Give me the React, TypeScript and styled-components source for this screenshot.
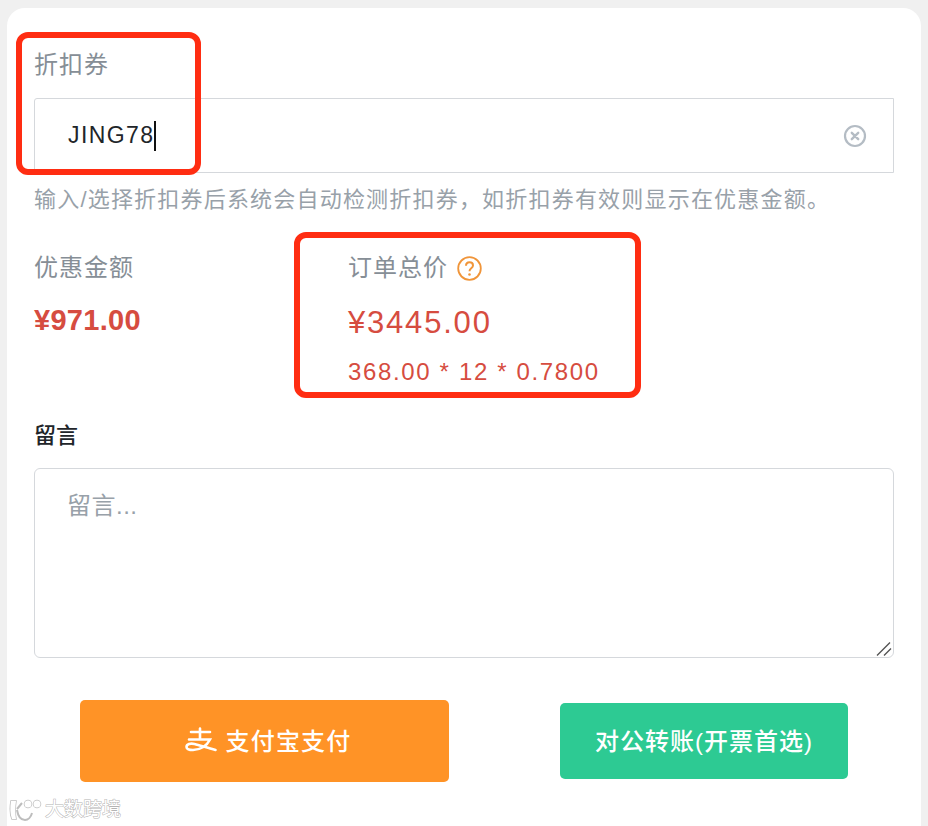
import styled, { createGlobalStyle } from "styled-components";
import { useState } from "react";

const GlobalStyle = createGlobalStyle`
  html, body {
    margin: 0;
    padding: 0;
    height: 826px;
    overflow: hidden;
    background: #f0f0f0;
    font-family: "Liberation Sans", "Noto Sans CJK SC", sans-serif;
  }
`;

const Page = styled.div`
  position: relative;
  width: 928px;
  height: 826px;
  padding: 8px 7px 0;
  box-sizing: border-box;
  overflow: hidden;
`;

const Card = styled.div`
  background: #fff;
  border-radius: 18px 18px 0 0;
  height: 818px;
  box-sizing: border-box;
  padding: 40px 27px 0;
  display: flex;
  flex-direction: column;
`;

const Label = styled.div<{ $dark?: boolean }>`
  font-size: 24px;
  line-height: 34px;
  letter-spacing: 1px;
  color: ${(p) => (p.$dark ? "#212529" : "#868e96")};
  font-weight: ${(p) => (p.$dark ? 500 : 400)};
`;

const DarkLabel = styled(Label)`
  font-size: 22px;
  line-height: 30px;
  letter-spacing: 0;
`;

const InputWrap = styled.div`
  margin-top: 16px;
  height: 75px;
  box-sizing: border-box;
  border: 1px solid #d5d8dc;
  border-radius: 3px 0 0 3px;
  display: flex;
  align-items: center;
  padding: 0 26px 0 33px;
`;

const CouponValue = styled.span`
  font-size: 23px;
  letter-spacing: 1.4px;
  color: #212529;
`;

const Caret = styled.span`
  width: 2px;
  height: 30px;
  background: #111;
`;

const ClearButton = styled.button`
  margin-left: auto;
  width: 24px;
  height: 24px;
  padding: 0;
  border: 0;
  background: none;
  display: flex;
`;

const Help = styled.div`
  margin-top: 11px;
  font-size: 22px;
  line-height: 32px;
  letter-spacing: 1.2px;
  color: #98a1a9;
`;

const Summary = styled.div`
  display: grid;
  grid-template-columns: 314px 1fr;
  margin-top: 35px;
`;

const Column = styled.div`
  display: flex;
  flex-direction: column;
`;

const LabelRow = styled.div`
  display: flex;
  align-items: center;
  gap: 9px;
`;

const Amount = styled.div<{ $bold?: boolean }>`
  margin-top: ${(p) => (p.$bold ? "15px" : "18px")};
  font-size: ${(p) => (p.$bold ? "29px" : "31px")};
  line-height: 40px;
  color: #d64c40;
  font-weight: ${(p) => (p.$bold ? 700 : 400)};
  letter-spacing: ${(p) => (p.$bold ? "0.3px" : "1.8px")};
`;

const Formula = styled.div`
  margin-top: 12px;
  font-size: 24px;
  line-height: 34px;
  letter-spacing: 1.65px;
  color: #d64c40;
`;

const MessageBlock = styled.div`
  margin-top: 32px;
  display: flex;
  flex-direction: column;
  gap: 17px;
`;

const MessageField = styled.div`
  position: relative;
  width: 860px;
  height: 190px;
`;

const MessageInput = styled.textarea`
  display: block;
  width: 100%;
  height: 100%;
  box-sizing: border-box;
  border: 1px solid #d5d8dc;
  border-radius: 6px;
  padding: 20px 32px;
  font-family: inherit;
  font-size: 24px;
  line-height: 34px;
  letter-spacing: 0.5px;
  outline: none;
  resize: none;

  &::placeholder {
    color: #98a1a9;
    opacity: 1;
  }
`;

const ResizeGrip = styled.svg`
  position: absolute;
  right: 2px;
  bottom: 2px;
`;

const Actions = styled.div`
  display: flex;
  align-items: center;
  margin-top: 42px;
  padding-left: 46px;
  gap: 111px;
`;

const PayButton = styled.button<{ $green?: boolean }>`
  border: 0;
  border-radius: 5px;
  color: #fff;
  font-family: inherit;
  font-size: 24px;
  font-weight: 500;
  letter-spacing: ${(p) => (p.$green ? "1px" : "1.2px")};
  display: flex;
  align-items: center;
  justify-content: center;
  gap: 9px;
  padding: ${(p) => (p.$green ? "0 0 4px" : "0 0 4px 7px")};
  width: ${(p) => (p.$green ? "288px" : "369px")};
  height: ${(p) => (p.$green ? "76px" : "82px")};
  background: ${(p) => (p.$green ? "#2dca93" : "#ff9326")};
`;

const Highlight = styled.div`
  position: absolute;
  box-sizing: border-box;
  border: 6px solid #ff2d12;
  border-radius: 12px;
`;

const CouponHighlight = styled(Highlight)`
  left: 16px;
  top: 32px;
  width: 185px;
  height: 143px;
`;

const TotalHighlight = styled(Highlight)`
  left: 294px;
  top: 232px;
  width: 347px;
  height: 166px;
`;

const Watermark = styled.div`
  position: absolute;
  left: 9px;
  top: 796px;
  display: flex;
  align-items: center;
  gap: 3px;
  color: #fff;
  font-size: 19px;
  line-height: 26px;
  -webkit-text-stroke: 1px #b4b4b4;
  paint-order: stroke;
`;

const AlipayMark = () => (
  <svg width="32" height="25" viewBox="0 0 32 25" fill="none" stroke="#fff" strokeWidth="2.600" strokeLinecap="round">
    <path d="M6 5h19M15 1.500v11M4 12.500h21c-3 6-9 10-17 10.500-4 0-6.500-1-6.500-3 0-3 4-4 8-3 6 1.500 13 4 21 6" />
  </svg>
);

const ClearIcon = () => (
  <svg width="24" height="24" viewBox="0 0 24 24" fill="none" stroke="#b4bcc4" strokeLinecap="round">
    <circle cx="12" cy="12" r="10" strokeWidth="2.200" />
    <path d="M8.800 8.800l6.400 6.400M15.200 8.800l-6.400 6.400" strokeWidth="2.400" />
  </svg>
);

const HelpIcon = () => (
  <svg width="25" height="25" viewBox="0 0 25 25" fill="none" stroke="#f0953a">
    <circle cx="12.500" cy="12.500" r="11.300" strokeWidth="1.800" />
    <path d="M9 9.800c0-2.200 1.600-3.500 3.500-3.500s3.500 1.300 3.500 3.200c0 2.800-3.500 2.800-3.500 5.700" strokeWidth="2" />
    <circle cx="12.500" cy="18.500" r="1.300" fill="#f0953a" stroke="none" />
  </svg>
);

const WatermarkLogo = () => (
  <svg width="33" height="28" viewBox="0 0 33 28" fill="none" stroke="#bdbdbd" strokeWidth="1.500">
    <path d="M2 5c-1 6-1 13 1 18h4c-1-5-1-12 0-18z" fill="#fff" />
    <path d="M8 13l5-6M8 14c1 6 4 10 8 10 3 0 6-3 7-7" strokeWidth="2" />
    <circle cx="19" cy="8" r="3.500" fill="#fff" />
    <circle cx="28" cy="8" r="3.500" fill="#fff" />
  </svg>
);

export default function App() {
  const [message, setMessage] = useState("");
  return (
    <Page>
      <GlobalStyle />
      <Card>
        <Label>折扣券</Label>
        <InputWrap>
          <CouponValue>JING78</CouponValue>
          <Caret />
          <ClearButton aria-label="清除">
            <ClearIcon />
          </ClearButton>
        </InputWrap>
        <Help>输入/选择折扣券后系统会自动检测折扣券，如折扣券有效则显示在优惠金额。</Help>
        <Summary>
          <Column>
            <Label>优惠金额</Label>
            <Amount $bold>¥971.00</Amount>
          </Column>
          <Column>
            <LabelRow>
              <Label>订单总价</Label>
              <HelpIcon />
            </LabelRow>
            <Amount>¥3445.00</Amount>
            <Formula>368.00 * 12 * 0.7800</Formula>
          </Column>
        </Summary>
        <MessageBlock>
          <DarkLabel $dark>留言</DarkLabel>
          <MessageField>
            <MessageInput
              placeholder="留言..."
              value={message}
              onChange={(e) => setMessage(e.target.value)}
            />
            <ResizeGrip width="16" height="14" viewBox="0 0 16 14" stroke="#555" strokeWidth="1.400">
              <path d="M1 13.500L14 .5M8 13.500L15 6.500" />
            </ResizeGrip>
          </MessageField>
        </MessageBlock>
        <Actions>
          <PayButton>
            <AlipayMark />
            支付宝支付
          </PayButton>
          <PayButton $green>对公转账(开票首选)</PayButton>
        </Actions>
      </Card>
      <CouponHighlight />
      <TotalHighlight />
      <Watermark>
        <WatermarkLogo />
        大数跨境
      </Watermark>
    </Page>
  );
}
